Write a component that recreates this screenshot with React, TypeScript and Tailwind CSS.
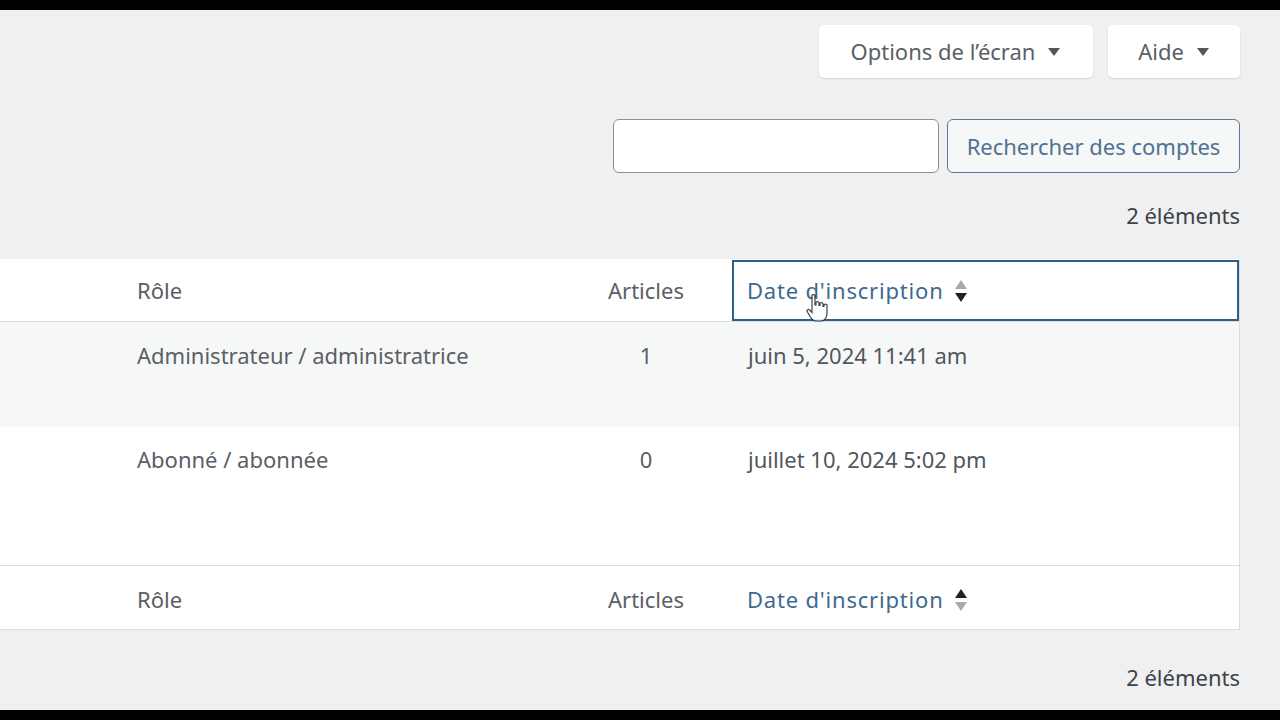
import React from "react";

const font = { fontFamily: "'Noto Sans', 'Open Sans', sans-serif" };

function SortArrows({ active }: { active: "up" | "down" }) {
  return (
    <svg width="14" height="26" viewBox="0 0 14 26" className="ml-[10px]">
      <path d="M7 2 L13 11 L1 11 Z" fill={active === "up" ? "#1d2327" : "#a7aaad"} />
      <path d="M7 24 L13 15 L1 15 Z" fill={active === "down" ? "#1d2327" : "#a7aaad"} />
    </svg>
  );
}

function Caret() {
  return (
    <svg width="14" height="10" viewBox="0 0 14 10" className="ml-3">
      <path d="M1 1 L13 1 L7 9 Z" fill="#50575e" />
    </svg>
  );
}

function HandCursor() {
  return (
    <svg width="22" height="30" viewBox="0 0 22 30" className="absolute left-[806px] top-[283px]">
      <path
        d="M6 2.5 C6 1.3 9 1.3 9 2.5 L9 12 L10 12 L10 9.5 C10 8.3 13 8.3 13 9.5 L13 12.5 L14 12.5 L14 10.5 C14 9.3 17 9.3 17 10.5 L17 13.5 L18 13.5 L18 12 C18 10.8 21 10.8 21 12 L21 20 C21 24 19 28 15 28 L10 28 C7 28 5.5 26 4 23.5 L1.2 18.5 C0.5 17.2 2.2 15.8 3.4 16.8 L6 19.5 Z"
        fill="#ffffff"
        stroke="#1d2327"
        strokeWidth="1.2"
        opacity="0.85"
      />
    </svg>
  );
}

const cols = "grid grid-cols-[121px_439px_172px_1fr]";

export default function App() {
  return (
    <div className="w-[1280px] h-[720px] bg-black flex flex-col overflow-hidden" style={font}>
      <div className="h-[10px] shrink-0" />
      <main className="relative flex-1 bg-[#f0f0f1] pr-[40px] flex flex-col text-[22px] text-[#5a6066]">
        <div className="flex justify-end gap-[15px] pt-[15px]">
          <button className="h-[53px] w-[274px] flex items-center justify-center bg-white rounded-[5px] shadow-[0_1px_2px_rgba(0,0,0,0.12)] text-[#5a6066]">
            Options de l’écran
            <Caret />
          </button>
          <button className="h-[53px] w-[132px] flex items-center justify-center bg-white rounded-[5px] shadow-[0_1px_2px_rgba(0,0,0,0.12)] text-[#5a6066]">
            Aide
            <Caret />
          </button>
        </div>

        <div className="flex justify-end gap-[8px] mt-[41px]">
          <div className="h-[54px] w-[326px] bg-white border border-[#8c8f94] rounded-[6px]" />
          <button className="h-[54px] w-[293px] bg-[#f6f7f7] border-[1.5px] border-[#5b7a96] rounded-[6px] text-[#4f7292]">
            Rechercher des comptes
          </button>
        </div>

        <div className="flex justify-end mt-[29px] h-[26px] items-center text-[#3c434a]">2 éléments</div>

        <div className="mt-[31px] bg-white border-r border-[#dcdcde]">
          <div className={`${cols} h-[63px] items-center pt-[1px] border-b border-[#dcdcde]`}>
            <div />
            <div className="pl-[16px]">Rôle</div>
            <div className="text-center">Articles</div>
            <div className="h-full flex items-center pl-[13px] border-2 border-[#2f5f8a] text-[#3e6a90] tracking-[0.8px]">
              Date d'inscription
              <SortArrows active="down" />
            </div>
          </div>
          <div className={`${cols} h-[105px] bg-[#f6f7f7] pt-[17px]`}>
            <div />
            <div className="pl-[16px]">Administrateur / administratrice</div>
            <div className="text-center">1</div>
            <div className="pl-[16px] text-[#50575e]">juin 5, 2024 11:41 am</div>
          </div>
          <div className={`${cols} h-[139px] pt-[16px] border-b border-[#dcdcde]`}>
            <div />
            <div className="pl-[16px]">Abonné / abonnée</div>
            <div className="text-center">0</div>
            <div className="pl-[16px] text-[#50575e]">juillet 10, 2024 5:02 pm</div>
          </div>
          <div className={`${cols} h-[64px] items-center pt-[4px] border-b border-[#dcdcde]`}>
            <div />
            <div className="pl-[16px]">Rôle</div>
            <div className="text-center">Articles</div>
            <div className="flex items-center pl-[15px] text-[#3e6a90] tracking-[0.8px]">
              Date d'inscription
              <SortArrows active="up" />
            </div>
          </div>
        </div>

        <div className="flex justify-end mt-[34px] h-[26px] items-center text-[#3c434a]">2 éléments</div>

        <HandCursor />
      </main>
      <div className="h-[10px] shrink-0" />
    </div>
  );
}
